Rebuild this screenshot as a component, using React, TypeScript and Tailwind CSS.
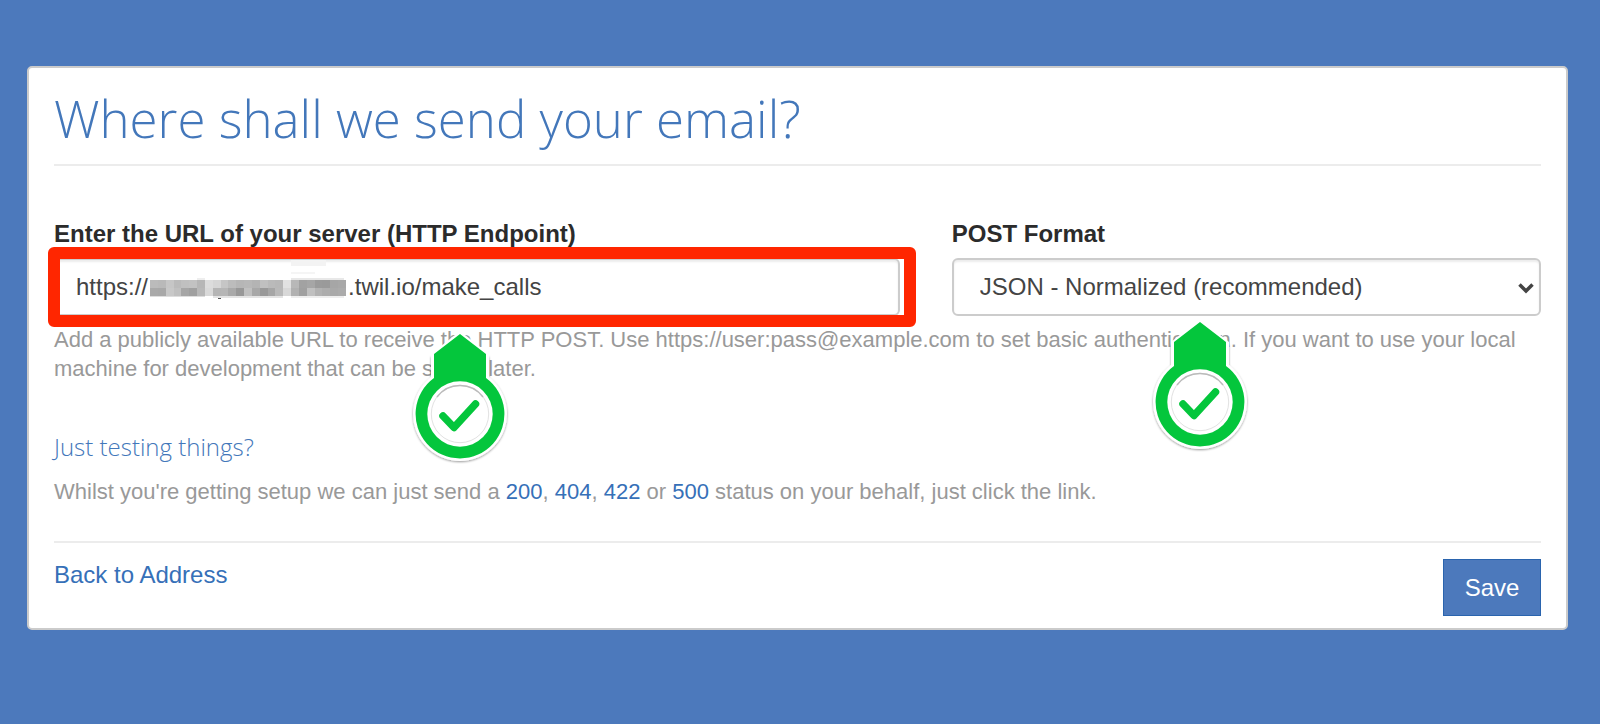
const statuses = ["200", "404", "422"];

// grey levels of the blurred subdomain, one row of cells per line
const mosaic = [
  ["#bbb", "#b9b9b9", "#c6c6c6", "#bbb", "#c0c0c0", "#c2c2c2", "#b6b6b6", "#dcdcdc", "#d6d6d6", "#c6c6c6", "#bcbcbc", "#b6b6b6", "#b8b8b8", "#b4b4b4", "#c0c0c0", "#bababa", "#b8b8b8", "#e2e2e2", "#b8b8b8", "#a2a2a2", "#a6a6a6", "#9b9b9b", "#9a9a9a", "#a6a6a6", "#a8a8a8"],
  ["#a9a9a9", "#a8a8a8", "#c8c8c8", "#c0c0c0", "#a6a6a6", "#a0a0a0", "#b8b8b8", "#d9d9d9", "#b5b5b5", "#b6b6b6", "#a9a9a9", "#989898", "#c0c0c0", "#a8a8a8", "#999", "#a6a6a6", "#b9b9b9", "#d8d8d8", "#b1b1b1", "#a0a0a0", "#c0c0c0", "#b2b2b2", "#adadad", "#a9a9a9", "#ababab"],
];

const Mosaic = () => (
  <svg
    width="196"
    height="40"
    viewBox="0 0 200 40"
    preserveAspectRatio="none"
    shapeRendering="crispEdges"
    className="pointer-events-none absolute top-[2px] left-24"
    aria-hidden="true"
  >
    <rect x="144" y="0" width="36" height="6" fill="#f3f3f3" />
    <rect x="144" y="12" width="24" height="2" fill="#f5f5f5" />
    <rect x="48" y="18" width="8" height="2" fill="#eee" />
    <rect x="144" y="18" width="54" height="2" fill="#e8e8e8" />
    {mosaic.map((row, y) =>
      row.map((color, x) => <rect key={`${x}-${y}`} x={x * 8} y={20 + y * 8} width="8" height="8" fill={color} />)
    )}
    <rect x="0" y="36" width="56" height="1" fill="#ddd" />
    <rect x="64" y="36" width="72" height="2" fill="#e4e4e4" />
    <rect x="144" y="36" width="54" height="2" fill="#eee" />
    <rect x="69" y="38" width="3" height="1" fill="#555" />
  </svg>
);

const CheckPin = ({ className }: { className: string }) => (
  <svg width="100" height="136" viewBox="0 0 100 136" className={className} aria-hidden="true">
    <defs>
      <filter id="pin-shadow" x="-10%" y="-10%" width="120%" height="120%">
        <feDropShadow dx="0" dy="1" stdDeviation="0.8" floodColor="#000" floodOpacity="0.4" />
      </filter>
    </defs>
    <g filter="url(#pin-shadow)">
      <path d="M21 26 H79 V47 A47 47 0 1 1 21 47 Z" fill="#fff" />
    </g>
    <path d="M50 1 L79 24 V48 H21 V24 Z" fill="#fff" />
    <path d="M50 4 L76 24 V48 A44.400 44.400 0 1 1 24 48 V24 Z" fill="#04c63c" />
    <circle cx="50" cy="84" r="32.700" fill="#fff" />
    <circle cx="50" cy="84" r="28.700" fill="none" stroke="#e2e2e2" strokeWidth="1" />
    <path d="M27 67 A28.700 28.700 0 0 1 73 67" fill="none" stroke="#bbb" strokeWidth="1.500" />
    <path d="M33 86 L44 97.500 L65.500 74" fill="none" stroke="#04c63c" strokeWidth="7.500" strokeLinecap="round" strokeLinejoin="round" />
  </svg>
);

const App = () => {
  return (
    <div className="min-h-screen bg-[#4c79bc] pl-[27px] pr-8 py-[66px] font-['Liberation_Sans',Arial,sans-serif]">
      <main className="rounded-[5px] border-2 border-[#cbcbcb] bg-white px-[25px] pb-3">
        <h1 className="border-b-2 border-[#ececec] pt-4 pb-3 text-[51px] leading-[68px] font-light text-[#4377ba] font-['Open_Sans',sans-serif]">
          Where shall we send your email?
        </h1>

        <div className="-mx-[26px] mt-[52px] grid grid-cols-12">
          <div className="col-span-7 px-[26px]">
            <label htmlFor="url" className="block text-2xl leading-8 font-bold text-[#2b2b2b]">
              Enter the URL of your server (HTTP Endpoint)
            </label>
            <div className="relative z-10 mt-2">
              <input
                id="url"
                type="text"
                defaultValue={"https://" + "\u00a0".repeat(30) + ".twil.io/make_calls"}
                className="block h-[58px] w-full rounded-md border-2 border-[#ccc] px-5 text-2xl text-[#444] shadow-[inset_0_2px_2px_rgba(0,0,0,0.075)]"
              />
              <Mosaic />
              <div className="pointer-events-none absolute -top-[11px] -right-4 -bottom-[11px] -left-[6px] rounded-md border-12 border-[#ff2600]" />
              <CheckPin className="pointer-events-none absolute top-[72px] left-[356px]" />
            </div>
          </div>
          <div className="col-span-5 px-[26px]">
            <label htmlFor="format" className="block text-2xl leading-8 font-bold text-[#2b2b2b]">
              POST Format
            </label>
            <div className="relative z-10 mt-2">
              <select
                id="format"
                className="block h-[58px] w-full appearance-none rounded-md border-2 border-[#ccc] bg-white px-[26px] text-2xl text-[#444] shadow-[inset_0_2px_2px_rgba(0,0,0,0.075)]"
              >
                <option>JSON - Normalized (recommended)</option>
              </select>
              <svg width="16" height="12" viewBox="0 0 16 12" className="pointer-events-none absolute top-6 right-[7px]" aria-hidden="true">
                <path d="M1.500 2.500 L8 9 L14.500 2.500" fill="none" stroke="#444" strokeWidth="3.500" />
              </svg>
              <CheckPin className="pointer-events-none absolute top-[60px] left-[198px]" />
            </div>
          </div>
        </div>

        <p className="mt-[9px] text-[22px] leading-[29px] text-[#999]">
          Add a publicly available URL to receive the HTTP POST. Use https://user:pass@example.com to set basic authentication. If you want to use your local machine for development that can be set up later.
        </p>

        <h2 className="mt-12 text-2xl leading-8 font-light text-[#4377ba] font-['Open_Sans',sans-serif]">
          Just testing things?
        </h2>
        <p className="mt-[14px] text-[22px] leading-[29px] text-[#999]">
          Whilst you're getting setup we can just send a{" "}
          {statuses.map((status, i) => (
            <span key={status}>
              <a href="#" className="text-[#3670b8]">{status}</a>
              {i < 2 ? ", " : " or "}
            </span>
          ))}
          <a href="#" className="text-[#3670b8]">500</a> status on your behalf, just click the link.
        </p>

        <div className="mt-[35px] flex items-start justify-between border-t-2 border-[#ececec] pt-4">
          <a href="#" className="text-2xl leading-8 text-[#3670b8]">Back to Address</a>
          <button type="button" className="h-[57px] w-[98px] border border-[#2a64ae] bg-[#4c79bc] text-2xl text-white">
            Save
          </button>
        </div>
      </main>
    </div>
  );
};

export default App;
